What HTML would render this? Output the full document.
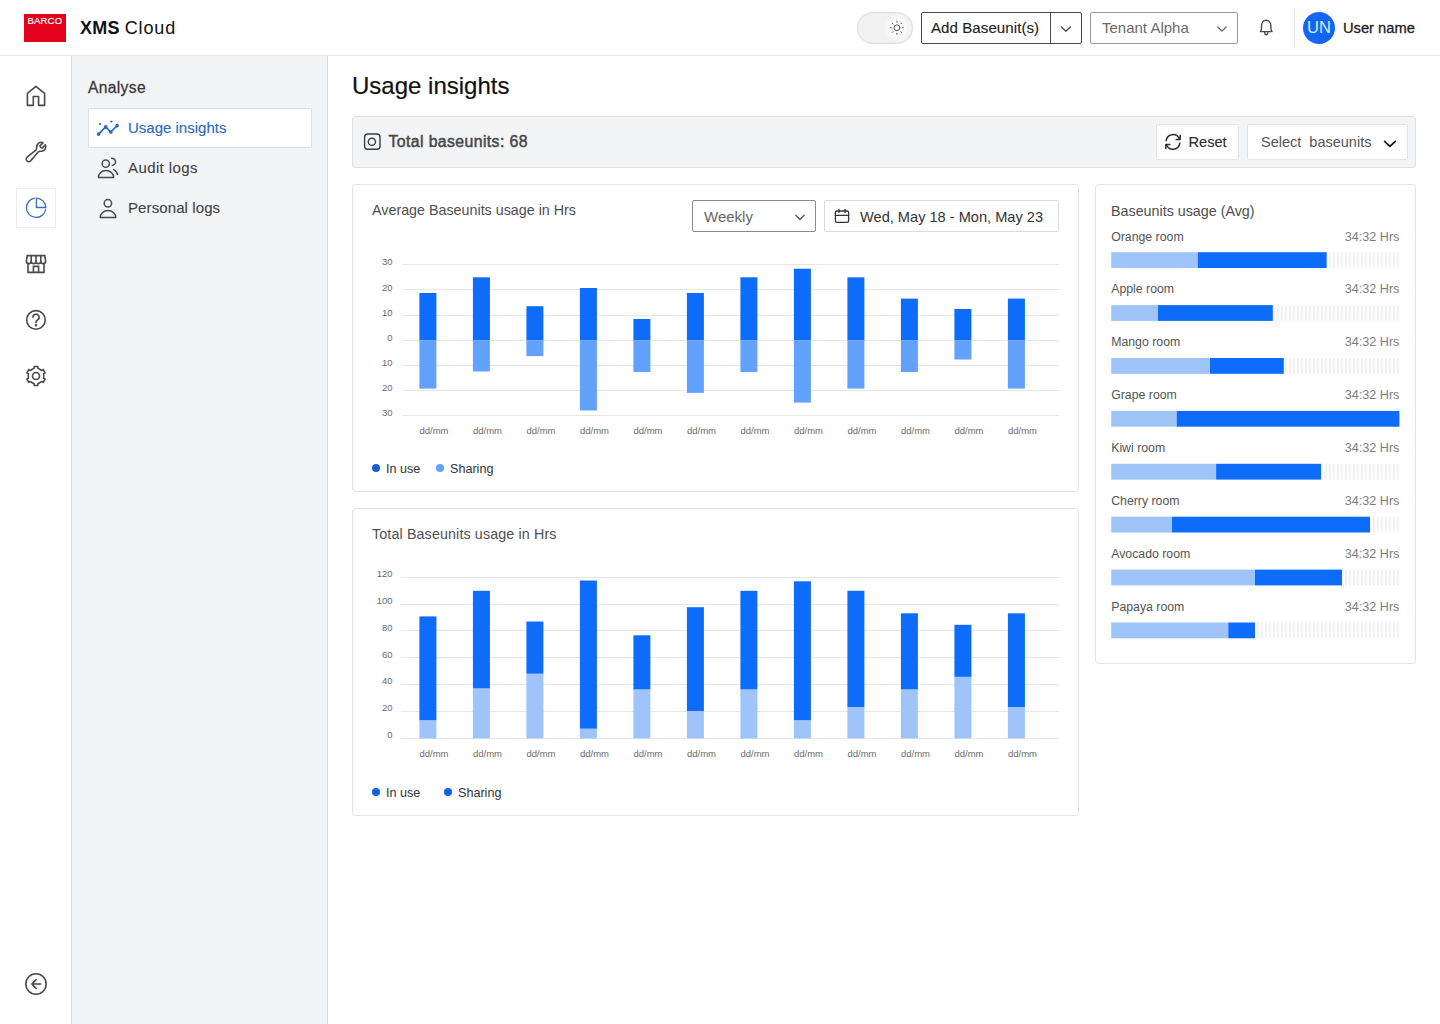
<!DOCTYPE html>
<html><head><meta charset="utf-8">
<style>
*{box-sizing:border-box;margin:0;padding:0}
html,body{width:1440px;height:1024px;overflow:hidden;background:#fff;font-family:"Liberation Sans",sans-serif;color:#333}
.a{position:absolute}
.t{position:absolute;white-space:nowrap;line-height:1}
svg.i{position:absolute;fill:none;stroke:#4d4d4d;stroke-width:1.5;stroke-linecap:round;stroke-linejoin:round}
</style></head><body>

<!-- HEADER -->
<div class="a" style="left:0;top:55px;width:1440px;height:1px;background:#e3e3e3"></div>
<div class="a" style="left:24px;top:14px;width:42px;height:28px;background:#e2001a"></div>
<div class="t" style="left:27.6px;top:16.2px;font-size:9.6px;color:#fff;letter-spacing:0.1px;-webkit-text-stroke:0.2px #fff">BARCO</div>
<div class="t" style="left:80px;top:19px;font-size:18px;color:#111"><b style="letter-spacing:0.2px">XMS</b> <span style="letter-spacing:0.9px">Cloud</span></div>

<!-- toggle -->
<div class="a" style="left:857px;top:12px;width:56px;height:32px;border-radius:16px;background:radial-gradient(circle at 40px 16px,#fdfdfd 0,#fbfbfb 7px,#f1f1f1 15px);box-shadow:inset 0 0 0 1.2px #e0e0e0"></div>

<!-- add baseunits -->
<div class="a" style="left:921px;top:12px;width:161px;height:32px;border:1px solid #4a4a4a;border-radius:2px"></div>
<div class="a" style="left:1050px;top:12px;width:1px;height:32px;background:#4a4a4a"></div>
<div class="t" style="left:931px;top:20px;font-size:15.1px;color:#222;-webkit-text-stroke:0.12px #222;letter-spacing:0.05px">Add Baseunit(s)</div>

<!-- tenant -->
<div class="a" style="left:1090px;top:12px;width:148px;height:32px;border:1px solid #9a9a9a;border-radius:2px"></div>
<div class="t" style="left:1102px;top:20px;font-size:15px;color:#6a6a6a">Tenant Alpha</div>

<div class="a" style="left:1294px;top:8px;width:1px;height:40px;background:#e6e6e6"></div>
<div class="a" style="left:1303px;top:12px;width:32px;height:32px;border-radius:16px;background:#1466f2"></div>
<div class="t" style="left:1307px;top:19.4px;font-size:16.5px;color:#d6ebff">UN</div>
<div class="t" style="left:1343px;top:20.6px;font-size:14.7px;color:#222;-webkit-text-stroke:0.3px #222">User name</div>

<!-- LEFT RAIL -->
<div class="a" style="left:71px;top:56px;width:1px;height:968px;background:#dcdcdc"></div>
<div class="a" style="left:16px;top:188px;width:40px;height:40px;border:1px solid #ececec;border-radius:1px;background:#fff"></div>

<!-- SIDEBAR -->
<div class="a" style="left:72px;top:56px;width:255px;height:968px;background:#f3f4f6"></div>
<div class="a" style="left:327px;top:56px;width:1px;height:968px;background:#dcdcdc"></div>
<div class="t" style="left:88px;top:80px;font-size:15.6px;color:#3a3a3a;letter-spacing:0.35px;-webkit-text-stroke:0.3px #3a3a3a">Analyse</div>
<div class="a" style="left:88px;top:108px;width:224px;height:40px;border:1px solid #dedede;background:#fff;border-radius:1px"></div>
<div class="t" style="left:128px;top:120px;font-size:15px;color:#2b6cc4;-webkit-text-stroke:0.15px #2b6cc4">Usage insights</div>
<div class="t" style="left:128px;top:160px;font-size:15px;color:#444;letter-spacing:0.4px;-webkit-text-stroke:0.15px #444">Audit logs</div>
<div class="t" style="left:128px;top:200px;font-size:15px;color:#444;letter-spacing:0.1px;-webkit-text-stroke:0.15px #444">Personal logs</div>

<!-- MAIN -->
<div class="t" style="left:352px;top:74px;font-size:24px;color:#111;-webkit-text-stroke:0.2px #111">Usage insights</div>

<div class="a" style="left:352px;top:116px;width:1064px;height:52px;border:1px solid #e2e2e2;border-radius:3px;background:#f3f4f6"></div>
<div class="t" style="left:388.5px;top:134px;font-size:15.8px;color:#484848;letter-spacing:0.4px;-webkit-text-stroke:0.5px #484848">Total baseunits: 68</div>
<div class="a" style="left:1156px;top:124px;width:83px;height:36px;border:1px solid #e3e3e3;border-radius:2px;background:#fff"></div>
<div class="t" style="left:1188.5px;top:135px;font-size:14.6px;color:#2a2a2a;-webkit-text-stroke:0.12px #2a2a2a">Reset</div>
<div class="a" style="left:1247px;top:124px;width:161px;height:36px;border:1px solid #e3e3e3;border-radius:2px;background:#fff"></div>
<div class="t" style="left:1261px;top:135px;font-size:14.5px;color:#555">Select&nbsp; baseunits</div>

<!-- CARD 1 -->
<div class="a" style="left:352px;top:184px;width:727px;height:308px;border:1px solid #e3e3e3;border-radius:4px"></div>
<div class="t" style="left:372px;top:203px;font-size:14.3px;color:#4f4f4f">Average Baseunits usage in Hrs</div>
<div class="a" style="left:692px;top:200px;width:124px;height:32px;border:1px solid #8a8a8a;border-radius:2px"></div>
<div class="t" style="left:704px;top:209px;font-size:15px;color:#666">Weekly</div>
<div class="a" style="left:824px;top:200px;width:235px;height:32px;border:1px solid #dcdcdc;border-radius:2px"></div>
<div class="t" style="left:860px;top:209.5px;font-size:14.6px;color:#333">Wed, May 18 - Mon, May 23</div>

<!-- CARD 2 -->
<div class="a" style="left:352px;top:508px;width:727px;height:308px;border:1px solid #e3e3e3;border-radius:4px"></div>
<div class="t" style="left:372px;top:527px;font-size:14.3px;color:#4f4f4f;letter-spacing:0.12px">Total Baseunits usage in Hrs</div>

<!-- CARD 3 -->
<div class="a" style="left:1095px;top:184px;width:321px;height:480px;border:1px solid #e3e3e3;border-radius:4px"></div>
<div class="t" style="left:1111px;top:203.5px;font-size:14.3px;color:#4f4f4f">Baseunits usage (Avg)</div>

<svg class="a" style="left:352px;top:184px" width="727" height="308" viewBox="352 184 727 308">
<line x1="402" x2="1059" y1="264.5" y2="264.5" stroke="#e6e6e6" stroke-width="1"/>
<text x="392.5" y="265.4" text-anchor="end" font-size="9.5" fill="#6b6b6b">30</text>
<line x1="402" x2="1059" y1="289.5" y2="289.5" stroke="#e6e6e6" stroke-width="1"/>
<text x="392.5" y="290.6" text-anchor="end" font-size="9.5" fill="#6b6b6b">20</text>
<line x1="402" x2="1059" y1="315.5" y2="315.5" stroke="#e6e6e6" stroke-width="1"/>
<text x="392.5" y="315.8" text-anchor="end" font-size="9.5" fill="#6b6b6b">10</text>
<line x1="402" x2="1059" y1="340.5" y2="340.5" stroke="#e6e6e6" stroke-width="1"/>
<text x="392.5" y="340.9" text-anchor="end" font-size="9.5" fill="#6b6b6b">0</text>
<line x1="402" x2="1059" y1="365.5" y2="365.5" stroke="#e6e6e6" stroke-width="1"/>
<text x="392.5" y="366.0" text-anchor="end" font-size="9.5" fill="#6b6b6b">10</text>
<line x1="402" x2="1059" y1="390.5" y2="390.5" stroke="#e6e6e6" stroke-width="1"/>
<text x="392.5" y="391.2" text-anchor="end" font-size="9.5" fill="#6b6b6b">20</text>
<line x1="402" x2="1059" y1="415.5" y2="415.5" stroke="#e6e6e6" stroke-width="1"/>
<text x="392.5" y="416.3" text-anchor="end" font-size="9.5" fill="#6b6b6b">30</text>
<rect x="419.4" y="293" width="17" height="47.4" fill="#0e6cfb"/>
<rect x="419.4" y="340.4" width="17" height="48.2" fill="#62a1fc"/>
<text x="434.0" y="433.7" text-anchor="middle" font-size="9.5" fill="#6b6b6b">dd/mm</text>
<rect x="472.9" y="277.3" width="17" height="63.1" fill="#0e6cfb"/>
<rect x="472.9" y="340.4" width="17" height="31.1" fill="#62a1fc"/>
<text x="487.5" y="433.7" text-anchor="middle" font-size="9.5" fill="#6b6b6b">dd/mm</text>
<rect x="526.4" y="306.2" width="17" height="34.2" fill="#0e6cfb"/>
<rect x="526.4" y="340.4" width="17" height="15.7" fill="#62a1fc"/>
<text x="541.0" y="433.7" text-anchor="middle" font-size="9.5" fill="#6b6b6b">dd/mm</text>
<rect x="579.9" y="288" width="17" height="52.4" fill="#0e6cfb"/>
<rect x="579.9" y="340.4" width="17" height="70.1" fill="#62a1fc"/>
<text x="594.5" y="433.7" text-anchor="middle" font-size="9.5" fill="#6b6b6b">dd/mm</text>
<rect x="633.4" y="319" width="17" height="21.4" fill="#0e6cfb"/>
<rect x="633.4" y="340.4" width="17" height="31.6" fill="#62a1fc"/>
<text x="648.0" y="433.7" text-anchor="middle" font-size="9.5" fill="#6b6b6b">dd/mm</text>
<rect x="686.9" y="293" width="17" height="47.4" fill="#0e6cfb"/>
<rect x="686.9" y="340.4" width="17" height="52.5" fill="#62a1fc"/>
<text x="701.5" y="433.7" text-anchor="middle" font-size="9.5" fill="#6b6b6b">dd/mm</text>
<rect x="740.4" y="277.3" width="17" height="63.1" fill="#0e6cfb"/>
<rect x="740.4" y="340.4" width="17" height="31.6" fill="#62a1fc"/>
<text x="755.0" y="433.7" text-anchor="middle" font-size="9.5" fill="#6b6b6b">dd/mm</text>
<rect x="793.9" y="268.7" width="17" height="71.7" fill="#0e6cfb"/>
<rect x="793.9" y="340.4" width="17" height="62.2" fill="#62a1fc"/>
<text x="808.5" y="433.7" text-anchor="middle" font-size="9.5" fill="#6b6b6b">dd/mm</text>
<rect x="847.4" y="277.3" width="17" height="63.1" fill="#0e6cfb"/>
<rect x="847.4" y="340.4" width="17" height="48.2" fill="#62a1fc"/>
<text x="862.0" y="433.7" text-anchor="middle" font-size="9.5" fill="#6b6b6b">dd/mm</text>
<rect x="900.9" y="298.6" width="17" height="41.8" fill="#0e6cfb"/>
<rect x="900.9" y="340.4" width="17" height="31.6" fill="#62a1fc"/>
<text x="915.5" y="433.7" text-anchor="middle" font-size="9.5" fill="#6b6b6b">dd/mm</text>
<rect x="954.4" y="309" width="17" height="31.4" fill="#0e6cfb"/>
<rect x="954.4" y="340.4" width="17" height="19.1" fill="#62a1fc"/>
<text x="969.0" y="433.7" text-anchor="middle" font-size="9.5" fill="#6b6b6b">dd/mm</text>
<rect x="1007.9" y="298.6" width="17" height="41.8" fill="#0e6cfb"/>
<rect x="1007.9" y="340.4" width="17" height="48.2" fill="#62a1fc"/>
<text x="1022.5" y="433.7" text-anchor="middle" font-size="9.5" fill="#6b6b6b">dd/mm</text>
<circle cx="376" cy="468" r="4" fill="#1a5fc8"/>
<text x="386" y="472.7" font-size="12.6" fill="#333">In use</text>
<circle cx="440" cy="468" r="4" fill="#62a1fc"/>
<text x="450" y="472.7" font-size="12.6" fill="#333">Sharing</text>
</svg>
<svg class="a" style="left:352px;top:508px" width="727" height="308" viewBox="352 508 727 308">
<line x1="401" x2="1059" y1="738.5" y2="738.5" stroke="#e6e6e6" stroke-width="1"/>
<text x="392.5" y="738.1" text-anchor="end" font-size="9.5" fill="#6b6b6b">0</text>
<line x1="401" x2="1059" y1="711.5" y2="711.5" stroke="#e6e6e6" stroke-width="1"/>
<text x="392.5" y="711.3" text-anchor="end" font-size="9.5" fill="#6b6b6b">20</text>
<line x1="401" x2="1059" y1="684.5" y2="684.5" stroke="#e6e6e6" stroke-width="1"/>
<text x="392.5" y="684.4" text-anchor="end" font-size="9.5" fill="#6b6b6b">40</text>
<line x1="401" x2="1059" y1="657.5" y2="657.5" stroke="#e6e6e6" stroke-width="1"/>
<text x="392.5" y="657.6" text-anchor="end" font-size="9.5" fill="#6b6b6b">60</text>
<line x1="401" x2="1059" y1="630.5" y2="630.5" stroke="#e6e6e6" stroke-width="1"/>
<text x="392.5" y="630.8" text-anchor="end" font-size="9.5" fill="#6b6b6b">80</text>
<line x1="401" x2="1059" y1="604.5" y2="604.5" stroke="#e6e6e6" stroke-width="1"/>
<text x="392.5" y="603.9" text-anchor="end" font-size="9.5" fill="#6b6b6b">100</text>
<line x1="401" x2="1059" y1="577.5" y2="577.5" stroke="#e6e6e6" stroke-width="1"/>
<text x="392.5" y="577.1" text-anchor="end" font-size="9.5" fill="#6b6b6b">120</text>
<rect x="419.4" y="616.4" width="17" height="104.1" fill="#0e6cfb"/>
<rect x="419.4" y="720.5" width="17" height="17.9" fill="#9ec4f9"/>
<text x="434.0" y="756.8" text-anchor="middle" font-size="9.5" fill="#6b6b6b">dd/mm</text>
<rect x="472.9" y="590.8" width="17" height="97.8" fill="#0e6cfb"/>
<rect x="472.9" y="688.6" width="17" height="49.8" fill="#9ec4f9"/>
<text x="487.5" y="756.8" text-anchor="middle" font-size="9.5" fill="#6b6b6b">dd/mm</text>
<rect x="526.4" y="621.5" width="17" height="52.3" fill="#0e6cfb"/>
<rect x="526.4" y="673.8" width="17" height="64.6" fill="#9ec4f9"/>
<text x="541.0" y="756.8" text-anchor="middle" font-size="9.5" fill="#6b6b6b">dd/mm</text>
<rect x="579.9" y="580.5" width="17" height="148.3" fill="#0e6cfb"/>
<rect x="579.9" y="728.8" width="17" height="9.6" fill="#9ec4f9"/>
<text x="594.5" y="756.8" text-anchor="middle" font-size="9.5" fill="#6b6b6b">dd/mm</text>
<rect x="633.4" y="635.3" width="17" height="54.3" fill="#0e6cfb"/>
<rect x="633.4" y="689.6" width="17" height="48.8" fill="#9ec4f9"/>
<text x="648.0" y="756.8" text-anchor="middle" font-size="9.5" fill="#6b6b6b">dd/mm</text>
<rect x="686.9" y="607.2" width="17" height="104.1" fill="#0e6cfb"/>
<rect x="686.9" y="711.3" width="17" height="27.1" fill="#9ec4f9"/>
<text x="701.5" y="756.8" text-anchor="middle" font-size="9.5" fill="#6b6b6b">dd/mm</text>
<rect x="740.4" y="590.8" width="17" height="98.8" fill="#0e6cfb"/>
<rect x="740.4" y="689.6" width="17" height="48.8" fill="#9ec4f9"/>
<text x="755.0" y="756.8" text-anchor="middle" font-size="9.5" fill="#6b6b6b">dd/mm</text>
<rect x="793.9" y="581.3" width="17" height="139.2" fill="#0e6cfb"/>
<rect x="793.9" y="720.5" width="17" height="17.9" fill="#9ec4f9"/>
<text x="808.5" y="756.8" text-anchor="middle" font-size="9.5" fill="#6b6b6b">dd/mm</text>
<rect x="847.4" y="590.8" width="17" height="116.2" fill="#0e6cfb"/>
<rect x="847.4" y="707" width="17" height="31.4" fill="#9ec4f9"/>
<text x="862.0" y="756.8" text-anchor="middle" font-size="9.5" fill="#6b6b6b">dd/mm</text>
<rect x="900.9" y="613.3" width="17" height="76.3" fill="#0e6cfb"/>
<rect x="900.9" y="689.6" width="17" height="48.8" fill="#9ec4f9"/>
<text x="915.5" y="756.8" text-anchor="middle" font-size="9.5" fill="#6b6b6b">dd/mm</text>
<rect x="954.4" y="624.8" width="17" height="52.1" fill="#0e6cfb"/>
<rect x="954.4" y="676.9" width="17" height="61.5" fill="#9ec4f9"/>
<text x="969.0" y="756.8" text-anchor="middle" font-size="9.5" fill="#6b6b6b">dd/mm</text>
<rect x="1007.9" y="613.3" width="17" height="93.7" fill="#0e6cfb"/>
<rect x="1007.9" y="707" width="17" height="31.4" fill="#9ec4f9"/>
<text x="1022.5" y="756.8" text-anchor="middle" font-size="9.5" fill="#6b6b6b">dd/mm</text>
<circle cx="376" cy="792" r="4" fill="#1062e4"/>
<text x="386" y="796.7" font-size="12.6" fill="#333">In use</text>
<circle cx="448" cy="792" r="4" fill="#1062e4"/>
<text x="458" y="796.7" font-size="12.6" fill="#333">Sharing</text>
</svg>
<svg class="a" style="left:1095px;top:184px" width="321" height="480" viewBox="1095 184 321 480">
<defs><pattern id="st" patternUnits="userSpaceOnUse" width="4" height="16" x="0" y="0"><rect x="1" y="0" width="1.6" height="16" fill="#efefef"/></pattern></defs>
<text x="1111.2" y="240.5" font-size="12.3" fill="#555">Orange room</text>
<text x="1399.4" y="240.5" text-anchor="end" font-size="12.6" fill="#7d7d7d">34:32 Hrs</text>
<rect x="1326.7" y="252.2" width="72.7" height="15.8" fill="url(#st)"/>
<rect x="1111.2" y="252.2" width="86.6" height="15.8" fill="#9ec4f9"/>
<rect x="1197.8" y="252.2" width="128.9" height="15.8" fill="#0e6cfb"/>
<text x="1111.2" y="293.4" font-size="12.3" fill="#555">Apple room</text>
<text x="1399.4" y="293.4" text-anchor="end" font-size="12.6" fill="#7d7d7d">34:32 Hrs</text>
<rect x="1272.8" y="305.1" width="126.6" height="15.8" fill="url(#st)"/>
<rect x="1111.2" y="305.1" width="46.8" height="15.8" fill="#9ec4f9"/>
<rect x="1158.0" y="305.1" width="114.8" height="15.8" fill="#0e6cfb"/>
<text x="1111.2" y="346.3" font-size="12.3" fill="#555">Mango room</text>
<text x="1399.4" y="346.3" text-anchor="end" font-size="12.6" fill="#7d7d7d">34:32 Hrs</text>
<rect x="1283.8" y="358.0" width="115.6" height="15.8" fill="url(#st)"/>
<rect x="1111.2" y="358.0" width="98.8" height="15.8" fill="#9ec4f9"/>
<rect x="1210.0" y="358.0" width="73.8" height="15.8" fill="#0e6cfb"/>
<text x="1111.2" y="399.2" font-size="12.3" fill="#555">Grape room</text>
<text x="1399.4" y="399.2" text-anchor="end" font-size="12.6" fill="#7d7d7d">34:32 Hrs</text>
<rect x="1399.4" y="410.9" width="0.0" height="15.8" fill="url(#st)"/>
<rect x="1111.2" y="410.9" width="65.5" height="15.8" fill="#9ec4f9"/>
<rect x="1176.7" y="410.9" width="222.7" height="15.8" fill="#0e6cfb"/>
<text x="1111.2" y="452.1" font-size="12.3" fill="#555">Kiwi room</text>
<text x="1399.4" y="452.1" text-anchor="end" font-size="12.6" fill="#7d7d7d">34:32 Hrs</text>
<rect x="1321.0" y="463.8" width="78.4" height="15.8" fill="url(#st)"/>
<rect x="1111.2" y="463.8" width="104.9" height="15.8" fill="#9ec4f9"/>
<rect x="1216.1" y="463.8" width="104.9" height="15.8" fill="#0e6cfb"/>
<text x="1111.2" y="505.0" font-size="12.3" fill="#555">Cherry room</text>
<text x="1399.4" y="505.0" text-anchor="end" font-size="12.6" fill="#7d7d7d">34:32 Hrs</text>
<rect x="1370.0" y="516.7" width="29.4" height="15.8" fill="url(#st)"/>
<rect x="1111.2" y="516.7" width="60.8" height="15.8" fill="#9ec4f9"/>
<rect x="1172.0" y="516.7" width="198.0" height="15.8" fill="#0e6cfb"/>
<text x="1111.2" y="557.9" font-size="12.3" fill="#555">Avocado room</text>
<text x="1399.4" y="557.9" text-anchor="end" font-size="12.6" fill="#7d7d7d">34:32 Hrs</text>
<rect x="1342.0" y="569.6" width="57.4" height="15.8" fill="url(#st)"/>
<rect x="1111.2" y="569.6" width="143.8" height="15.8" fill="#9ec4f9"/>
<rect x="1255.0" y="569.6" width="87.0" height="15.8" fill="#0e6cfb"/>
<text x="1111.2" y="610.8" font-size="12.3" fill="#555">Papaya room</text>
<text x="1399.4" y="610.8" text-anchor="end" font-size="12.6" fill="#7d7d7d">34:32 Hrs</text>
<rect x="1255.0" y="622.5" width="144.4" height="15.8" fill="url(#st)"/>
<rect x="1111.2" y="622.5" width="117.1" height="15.8" fill="#9ec4f9"/>
<rect x="1228.3" y="622.5" width="26.7" height="15.8" fill="#0e6cfb"/>
</svg>
<svg class="a" style="left:0;top:0;overflow:visible" width="1440" height="1024" viewBox="0 0 1440 1024" fill="none" stroke-linecap="round" stroke-linejoin="round">
<!-- BARCO logo text handled in html -->
<!-- rail icons -->
<g stroke="#4a4a4a" stroke-width="1.6">
  <path d="M27.4 105.4V93.4L35.9 86.4L44.6 93.4V105.4H38.6V96.5H33.3V105.4Z"/>
  <g transform="translate(24 140)"><path d="M21.75 6.75a4.5 4.5 0 01-4.884 4.484c-1.076-.091-2.264.071-2.95.904l-7.152 8.684a2.548 2.548 0 11-3.586-3.586l8.684-7.152c.833-.686.995-1.874.904-2.95a4.5 4.5 0 016.336-4.486l-3.276 3.276a3.004 3.004 0 002.25 2.25l3.276-3.276c.294.64.398 1.35.398 2.05z"/></g>
  <!-- store -->
  <path d="M27.2 255.6H44.8L45.6 261.2C45.6 262.7 44.4 263.6 43.2 263.6C42 263.6 40.8 262.7 40.8 261.2C40.8 262.7 39.6 263.6 38.4 263.6C37.2 263.6 36 262.7 36 261.2C36 262.7 34.8 263.6 33.6 263.6C32.4 263.6 31.2 262.7 31.2 261.2C31.2 262.7 30 263.6 28.8 263.6C27.6 263.6 26.4 262.7 26.4 261.2Z"/>
  <path d="M31.2 256V261.2M36 256V261.2M40.8 256V261.2"/>
  <path d="M28 263.6V272.4H44V263.6"/>
  <path d="M33.4 272.4V266.4H38.6V272.4"/>
  <!-- help -->
  <circle cx="35.95" cy="319.9" r="9.3"/>
  <path d="M32.9 317.3a3.1 3.1 0 1 1 4.6 2.7c-.9.5-1.5 1.1-1.5 2.1v.6"/>
  <circle cx="36" cy="325.2" r="0.5" fill="#4a4a4a"/>
  <!-- gear -->
  <path d="M34.15 368.15 L34.15 366.45 L37.85 366.45 L37.85 368.15 L41.83 370.45 L43.30 369.60 L45.15 372.80 L43.68 373.65 L43.68 378.25 L45.15 379.10 L43.30 382.30 L41.83 381.45 L37.85 383.75 L37.85 385.45 L34.15 385.45 L34.15 383.75 L30.17 381.45 L28.70 382.30 L26.85 379.10 L28.32 378.25 L28.32 373.65 L26.85 372.80 L28.70 369.60 L30.17 370.45Z"/>
  <circle cx="36" cy="375.95" r="3.5"/>
  <!-- collapse -->
  <circle cx="36" cy="984" r="10.2"/>
  <path d="M40.6 984H31.8M36.2 979.6L31.8 984L36.2 988.4"/>
</g>
<!-- pie active -->
<g stroke="#3a6cc9" stroke-width="1.3">
  <path d="M34.4 198.2A9.7 9.7 0 1 0 45.7 209.5"/>
  <path d="M36.4 198.1V207.5H45.8A9.4 9.4 0 0 0 36.4 198.1Z"/>
</g>
<!-- sidebar icons -->
<g stroke="#2b6cc4" stroke-width="1.7">
  <path d="M98.6 134.1L105.7 126.8L110.8 132L117.1 125.6"/>
  <circle cx="98.6" cy="134.1" r="1" fill="#2b6cc4"/>
  <circle cx="105.7" cy="126.8" r="1" fill="#2b6cc4"/>
  <circle cx="110.8" cy="132" r="1" fill="#2b6cc4"/>
  <circle cx="117.1" cy="125.6" r="1" fill="#2b6cc4"/>
  <circle cx="99.9" cy="124" r="0.6" fill="#2b6cc4" stroke-width="1"/>
  <circle cx="111.3" cy="121.6" r="0.6" fill="#2b6cc4" stroke-width="1"/>
</g>
<g stroke="#4a4a4a" stroke-width="1.5">
  <circle cx="105.8" cy="163.7" r="3.6"/>
  <path d="M98.4 177.4A7.6 7 0 0 1 113.6 177.4Z"/>
  <path d="M111.6 158.2A3.6 3.6 0 0 1 112.3 165.4"/>
  <path d="M113.6 169.6A7.6 7 0 0 1 117.4 174.6"/>
  <circle cx="107.9" cy="203.3" r="3.7"/>
  <path d="M100.2 217.5A7.8 7 0 0 1 115.8 217.5Z"/>
</g>
<!-- header icons -->
<g stroke="#555" stroke-width="1">
  <circle cx="896.9" cy="27.8" r="2.9"/>
  <path d="M896.9 21.3v1.1M896.9 33.2v1.1M890.4 27.8h1.1M902.3 27.8h1.1M892.3 23.2l.8.8M900.7 31.6l.8.8M892.3 32.4l.8-.8M900.7 24l.8-.8"/>
</g>
<path d="M1061.4 27L1065.9 31.3L1070.3 27" stroke="#555" stroke-width="1.5"/>
<path d="M1217.8 27L1221.9 31.1L1226.1 27" stroke="#666" stroke-width="1.3"/>
<g stroke="#4a4a4a" stroke-width="1.4">
  <path d="M1260.4 31.6C1261.6 30.5 1261.6 28.6 1261.6 25.6C1261.6 22.4 1263.6 20.2 1266.2 20.2C1268.8 20.2 1270.8 22.4 1270.8 25.6C1270.8 28.6 1270.8 30.5 1272 31.6Z"/>
  <path d="M1264.6 31.8C1264.6 33.4 1265.3 34.8 1266.2 34.8C1267.1 34.8 1267.8 33.4 1267.8 31.8"/>
</g>
<!-- total box icon -->
<g stroke="#3d3d3d" stroke-width="1.4">
  <rect x="364.6" y="134" width="15.4" height="15.3" rx="3"/>
  <circle cx="371.9" cy="141.8" r="3.6"/>
</g>
<!-- reset icon -->
<g stroke="#2d2d2d" stroke-width="1.5">
  <path d="M1166.2 140.6A6.9 6.9 0 0 1 1179.4 138.8"/>
  <path d="M1180.2 135.2V139.4H1176.2"/>
  <path d="M1179.8 143.2A6.9 6.9 0 0 1 1166.6 145.0"/>
  <path d="M1165.8 148.6V144.4H1169.8"/>
</g>
<path d="M1384.6 141.3L1389.9 146.4L1395.3 141.3" stroke="#111" stroke-width="1.7"/>
<path d="M795.8 215.3L800 219.5L804.1 215.3" stroke="#555" stroke-width="1.3"/>
<!-- calendar -->
<g stroke="#333" stroke-width="1.3">
  <rect x="835.4" y="211" width="13.2" height="11.4" rx="1.6"/>
  <path d="M835.4 215.4H848.6M839 209.4V212.4M845 209.4V212.4"/>
</g>
</svg>
<div class="t" style="left:26.5px;top:17.5px;font-size:8.5px;color:#fff;font-weight:700;letter-spacing:-0.2px"></div>

</body></html>
